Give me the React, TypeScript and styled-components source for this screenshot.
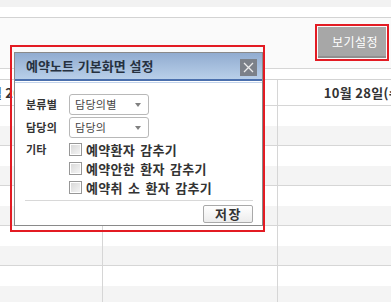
import React from "react";
import styled, { createGlobalStyle } from "styled-components";

const GlobalStyle = createGlobalStyle`
  html, body { margin: 0; padding: 0; background: #fff; overflow: hidden; }
  body { font-family: "Noto Sans CJK KR", "Noto Sans", sans-serif; color: #333; }
  * { box-sizing: border-box; }
`;

const Page = styled.div`
  position: relative;
  width: 391px;
  height: 302px;
  overflow: hidden;
  background: #fff;
`;

const TopStrip = styled.div`
  height: 7px;
  background: #f2f2f2;
`;

const Band = styled.div<{ $h: number }>`
  height: ${(p) => p.$h}px;
  background: #fff;
  border-bottom: 1px solid #d3d3d3;
`;

const Toolbar = styled.div`
  height: 51px;
  display: flex;
  justify-content: flex-end;
  align-items: flex-start;
  padding: 9px 5px 0 0;
  background: #fafafa;
  border-bottom: 1px solid #d6d6d6;
`;

const ViewButton = styled.button`
  width: 68px;
  height: 31px;
  padding: 0 0 0 6px;
  border: none;
  border-bottom: 2px solid #8f8f8f;
  background: #a7a7a7;
  color: #fff;
  font-family: "Noto Sans CJK KR", sans-serif;
  font-size: 12px;
  letter-spacing: 0.4px;
  outline: 2px solid #e31b23;
  outline-offset: 1px;
`;

const Viewport = styled.div`
  overflow: hidden;
`;

const Grid = styled.div`
  display: grid;
  grid-template-columns: repeat(3, 175px);
  margin-left: -72px;
  width: max-content;
`;

const DayColumn = styled.div`
  border-right: 1px solid #d6d6d6;
`;

const DayHeader = styled.div`
  height: 26px;
  display: flex;
  align-items: center;
  justify-content: center;
  border-bottom: 1px solid #d6d6d6;
  font-size: 13px;
  font-weight: 700;
  line-height: 12px;
  letter-spacing: 0.3px;
  color: #333;
  white-space: nowrap;
`;

const HourSlot = styled.div`
  height: 40px;
  display: grid;
  grid-template-rows: 20px 19px;
  border-bottom: 1px solid #d6d6d6;
`;

const HalfSlot = styled.div<{ $shade?: boolean }>`
  background: ${(p) => (p.$shade ? "#f4f4f4" : "#fff")};
`;

const Highlight = styled.div`
  position: absolute;
  left: 10px;
  top: 45px;
  width: 255px;
  height: 187px;
  border: 2px solid #e31b23;
  padding: 5px 0 0 2px;
`;

const Dialog = styled.div`
  width: 249px;
  height: 174px;
  border: 1px solid #8a8a8a;
  background: #fff;
  display: flex;
  flex-direction: column;
`;

const TitleBar = styled.div`
  height: 28px;
  flex: none;
  display: flex;
  align-items: flex-start;
  justify-content: space-between;
  padding: 0 5px 0 11px;
  background: linear-gradient(#91acd0, #b8cfe9);
  border-bottom: 2px solid #4a6fad;
  box-shadow: 0 1px 0 #fff, 0 2px 0 #c3d4ec;
`;

const Title = styled.div`
  align-self: center;
  font-size: 13px;
  font-weight: 700;
  line-height: 16px;
  word-spacing: 1px;
  color: #263140;
  white-space: nowrap;
`;

const CloseButton = styled.button`
  margin-top: 6px;
  width: 17px;
  height: 17px;
  padding: 0;
  border: none;
  background: #7c8189;
  display: flex;
  align-items: center;
  justify-content: center;
`;

const Body = styled.div`
  padding: 13px 9px 0 11px;
  display: flex;
  flex-direction: column;
  gap: 2px;
`;

const FieldRow = styled.div`
  display: grid;
  grid-template-columns: 43px 1fr;
  align-items: start;
`;

const FieldLabel = styled.div<{ $h: number }>`
  height: ${(p) => p.$h}px;
  display: flex;
  align-items: center;
  font-size: 11px;
  font-weight: 700;
  line-height: 11px;
  letter-spacing: 0.2px;
  color: #333;
`;

const SelectBox = styled.div`
  width: 80px;
  height: 21px;
  border: 1px solid #b8b8b8;
  border-radius: 3px;
  background: #fff;
  display: flex;
  align-items: center;
  justify-content: space-between;
  padding: 0 7px 0 5px;
  font-size: 11px;
  line-height: 13px;
  letter-spacing: 0.3px;
  color: #444;
`;

const Arrow = styled.span`
  width: 0;
  height: 0;
  border-left: 3px solid transparent;
  border-right: 3px solid transparent;
  border-top: 4px solid #808080;
`;

const CheckList = styled.div`
  display: flex;
  flex-direction: column;
`;

const CheckRow = styled.label`
  height: 19px;
  display: flex;
  align-items: center;
  gap: 4px;
  font-size: 13px;
  font-weight: 700;
  line-height: 15px;
  letter-spacing: 0.3px;
  word-spacing: 2px;
  color: #333;
  white-space: nowrap;
`;

const CheckBox = styled.input`
  appearance: none;
  flex: none;
  margin: 0;
  width: 13px;
  height: 13px;
  border: 1px solid #979797;
  box-shadow: inset 0 0 0 1px #fff;
  background: linear-gradient(135deg, #d6d6d6, #f7f7f7);
`;

const Separator = styled.div`
  margin: 1px 0 0 -1px;
  height: 1px;
  background: #d8d8d8;
`;

const Footer = styled.div`
  display: flex;
  justify-content: flex-end;
  margin-top: 2px;
`;

const SaveButton = styled.button`
  width: 50px;
  height: 18px;
  padding: 0 0 0 1px;
  border: 1px solid #a9a9a9;
  border-radius: 2px;
  background: linear-gradient(#ffffff, #ececec);
  font-family: "Noto Sans CJK KR", sans-serif;
  font-size: 13px;
  font-weight: 700;
  line-height: 16px;
  letter-spacing: 1.5px;
  color: #333;
`;

const days = ["10월 26일(월)", "10월 27일(화)", "10월 28일(수)"];
const options = ["예약환자 감추기", "예약안한 환자 감추기", "예약취 소 환자 감추기"];

export default function App() {
  return (
    <Page>
      <GlobalStyle />
      <TopStrip />
      <Band $h={11} />
      <Toolbar>
        <ViewButton>보기설정</ViewButton>
      </Toolbar>
      <Band $h={11} />
      <Viewport>
        <Grid>
          {days.map((d) => (
            <DayColumn key={d}>
              <DayHeader>{d}</DayHeader>
              {[0, 1, 2, 3, 4].map((i) => (
                <HourSlot key={i}>
                  <HalfSlot />
                  <HalfSlot $shade />
                </HourSlot>
              ))}
            </DayColumn>
          ))}
        </Grid>
      </Viewport>

      <Highlight>
        <Dialog>
          <TitleBar>
            <Title>예약노트 기본화면 설정</Title>
            <CloseButton aria-label="닫기">
              <svg width="11" height="11" viewBox="0 0 11 11">
                <path d="M1 1L10 10M10 1L1 10" stroke="#ececec" strokeWidth="1.3" />
              </svg>
            </CloseButton>
          </TitleBar>
          <Body>
            <FieldRow>
              <FieldLabel $h={21}>분류별</FieldLabel>
              <SelectBox>
                <span>담당의별</span>
                <Arrow />
              </SelectBox>
            </FieldRow>
            <FieldRow>
              <FieldLabel $h={21}>담당의</FieldLabel>
              <SelectBox>
                <span>담당의</span>
                <Arrow />
              </SelectBox>
            </FieldRow>
            <FieldRow>
              <FieldLabel $h={19}>기타</FieldLabel>
              <CheckList>
                {options.map((o) => (
                  <CheckRow key={o}>
                    <CheckBox type="checkbox" />
                    {o}
                  </CheckRow>
                ))}
              </CheckList>
            </FieldRow>
            <Separator />
            <Footer>
              <SaveButton>저장</SaveButton>
            </Footer>
          </Body>
        </Dialog>
      </Highlight>
    </Page>
  );
}
